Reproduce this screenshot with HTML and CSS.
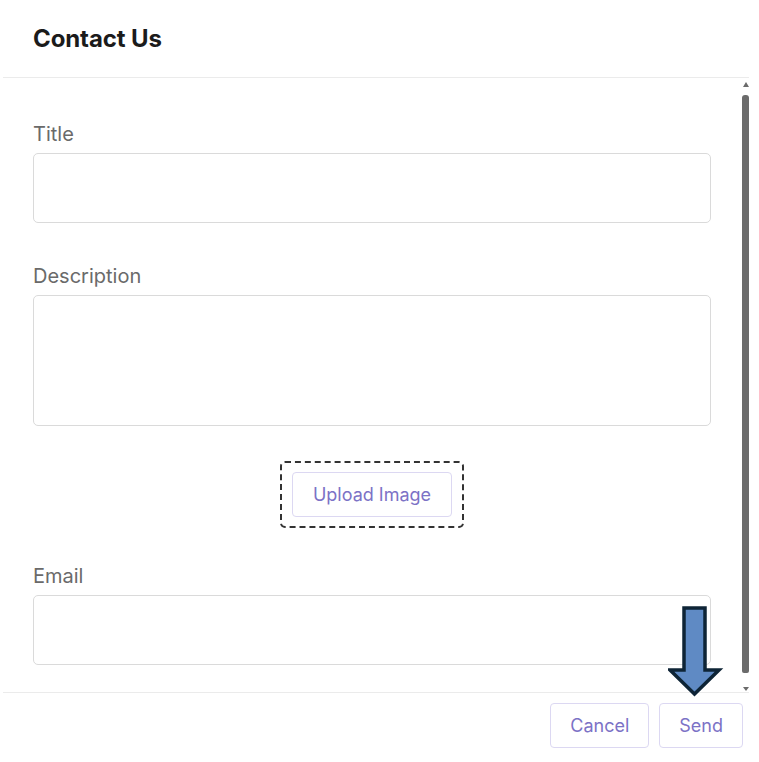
FILE: index.html
```html
<!DOCTYPE html>
<html lang="en">
<head>
<meta charset="utf-8">
<title>Contact Us</title>
<link rel="stylesheet" href="styles.css">
</head>
<body>
<div class="modal">
  <div class="header">
    <h1 class="title">Contact Us</h1>
  </div>
  <div class="body">
    <div class="content">
      <label class="label">Title</label>
      <div class="input"></div>
      <label class="label gap">Description</label>
      <div class="input tall"></div>
      <div class="upload-row">
        <div class="dashed">
          <button class="btn wide">Upload Image</button>
        </div>
      </div>
      <label class="label gap2">Email</label>
      <div class="input"></div>
    </div>
    <div class="scrollbar">
      <div class="arrow-up"></div>
      <div class="thumb"></div>
      <div class="arrow-down"></div>
    </div>
  </div>
  <div class="footer">
    <button class="btn">Cancel</button>
    <button class="btn">Send</button>
  </div>
</div>
<svg class="annot" width="56" height="96" viewBox="0 0 56 96">
  <polygon points="16,4 37,4 37,66 51,66 26.5,90 2,66 16,66" fill="#5f8ac4" stroke="#0e2436" stroke-width="3.5" stroke-linejoin="miter"/>
</svg>
</body>
</html>
```

FILE: styles.css
```css
* { box-sizing: border-box; }
html, body { margin: 0; padding: 0; background: #fff; }
body {
  font-family: Inter, "Noto Sans", "Liberation Sans", sans-serif;
  width: 759px;
  height: 762px;
  position: relative;
  overflow: hidden;
}
.modal {
  margin-left: 3px;
  width: 746px;
}
.header {
  padding: 24px 30px 23px;
  border-bottom: 1px solid #ebebeb;
}
.title {
  margin: 0;
  font-size: 24px;
  line-height: 30px;
  font-weight: 700;
  color: #1b1b1b;
  letter-spacing: -0.1px;
}
.body {
  display: flex;
  height: 614px;
}
.content {
  flex: 1;
  padding: 44px 31px 0 30px;
  overflow: hidden;
}
.label {
  display: block;
  font-size: 20px;
  line-height: 24px;
  color: #6a6a6a;
  margin-bottom: 7px;
}
.label.gap { margin-top: 41px; }
.label.gap2 { margin-top: 36px; }
.input {
  height: 70px;
  border: 1px solid #dadada;
  border-radius: 5px;
}
.input.tall { height: 131px; }
.upload-row {
  display: flex;
  justify-content: center;
  margin-top: 35px;
}
.dashed {
  border: 2px dashed #333;
  border-radius: 5px;
  padding: 9px 10px;
}
.btn {
  font-family: Inter, "Noto Sans", "Liberation Sans", sans-serif;
  font-size: 18px;
  color: #7c72c6;
  background: #fff;
  border: 1px solid #dcd8f2;
  border-radius: 4px;
  height: 45px;
  padding: 0 19px;
  line-height: 43px;
  cursor: pointer;
}
.btn.wide { padding: 0 20px; }
.scrollbar {
  width: 7px;
  display: flex;
  flex-direction: column;
  align-items: center;
  padding-top: 4px;
}
.arrow-up {
  width: 0; height: 0;
  border-left: 3px solid transparent;
  border-right: 3px solid transparent;
  border-bottom: 5px solid #6b6b6b;
}
.thumb {
  margin-top: 8px;
  width: 7px;
  height: 578px;
  background: #6b6b6b;
  border-radius: 3px 3px 2px 2px;
}
.arrow-down {
  margin-top: 14px;
  width: 0; height: 0;
  border-left: 3px solid transparent;
  border-right: 3px solid transparent;
  border-top: 4px solid #6b6b6b;
}
.footer {
  border-top: 1px solid #ebebeb;
  display: flex;
  justify-content: flex-end;
  gap: 10px;
  padding: 10px 6px 0 0;
}
.annot {
  position: absolute;
  left: 668px;
  top: 604px;
}
```
